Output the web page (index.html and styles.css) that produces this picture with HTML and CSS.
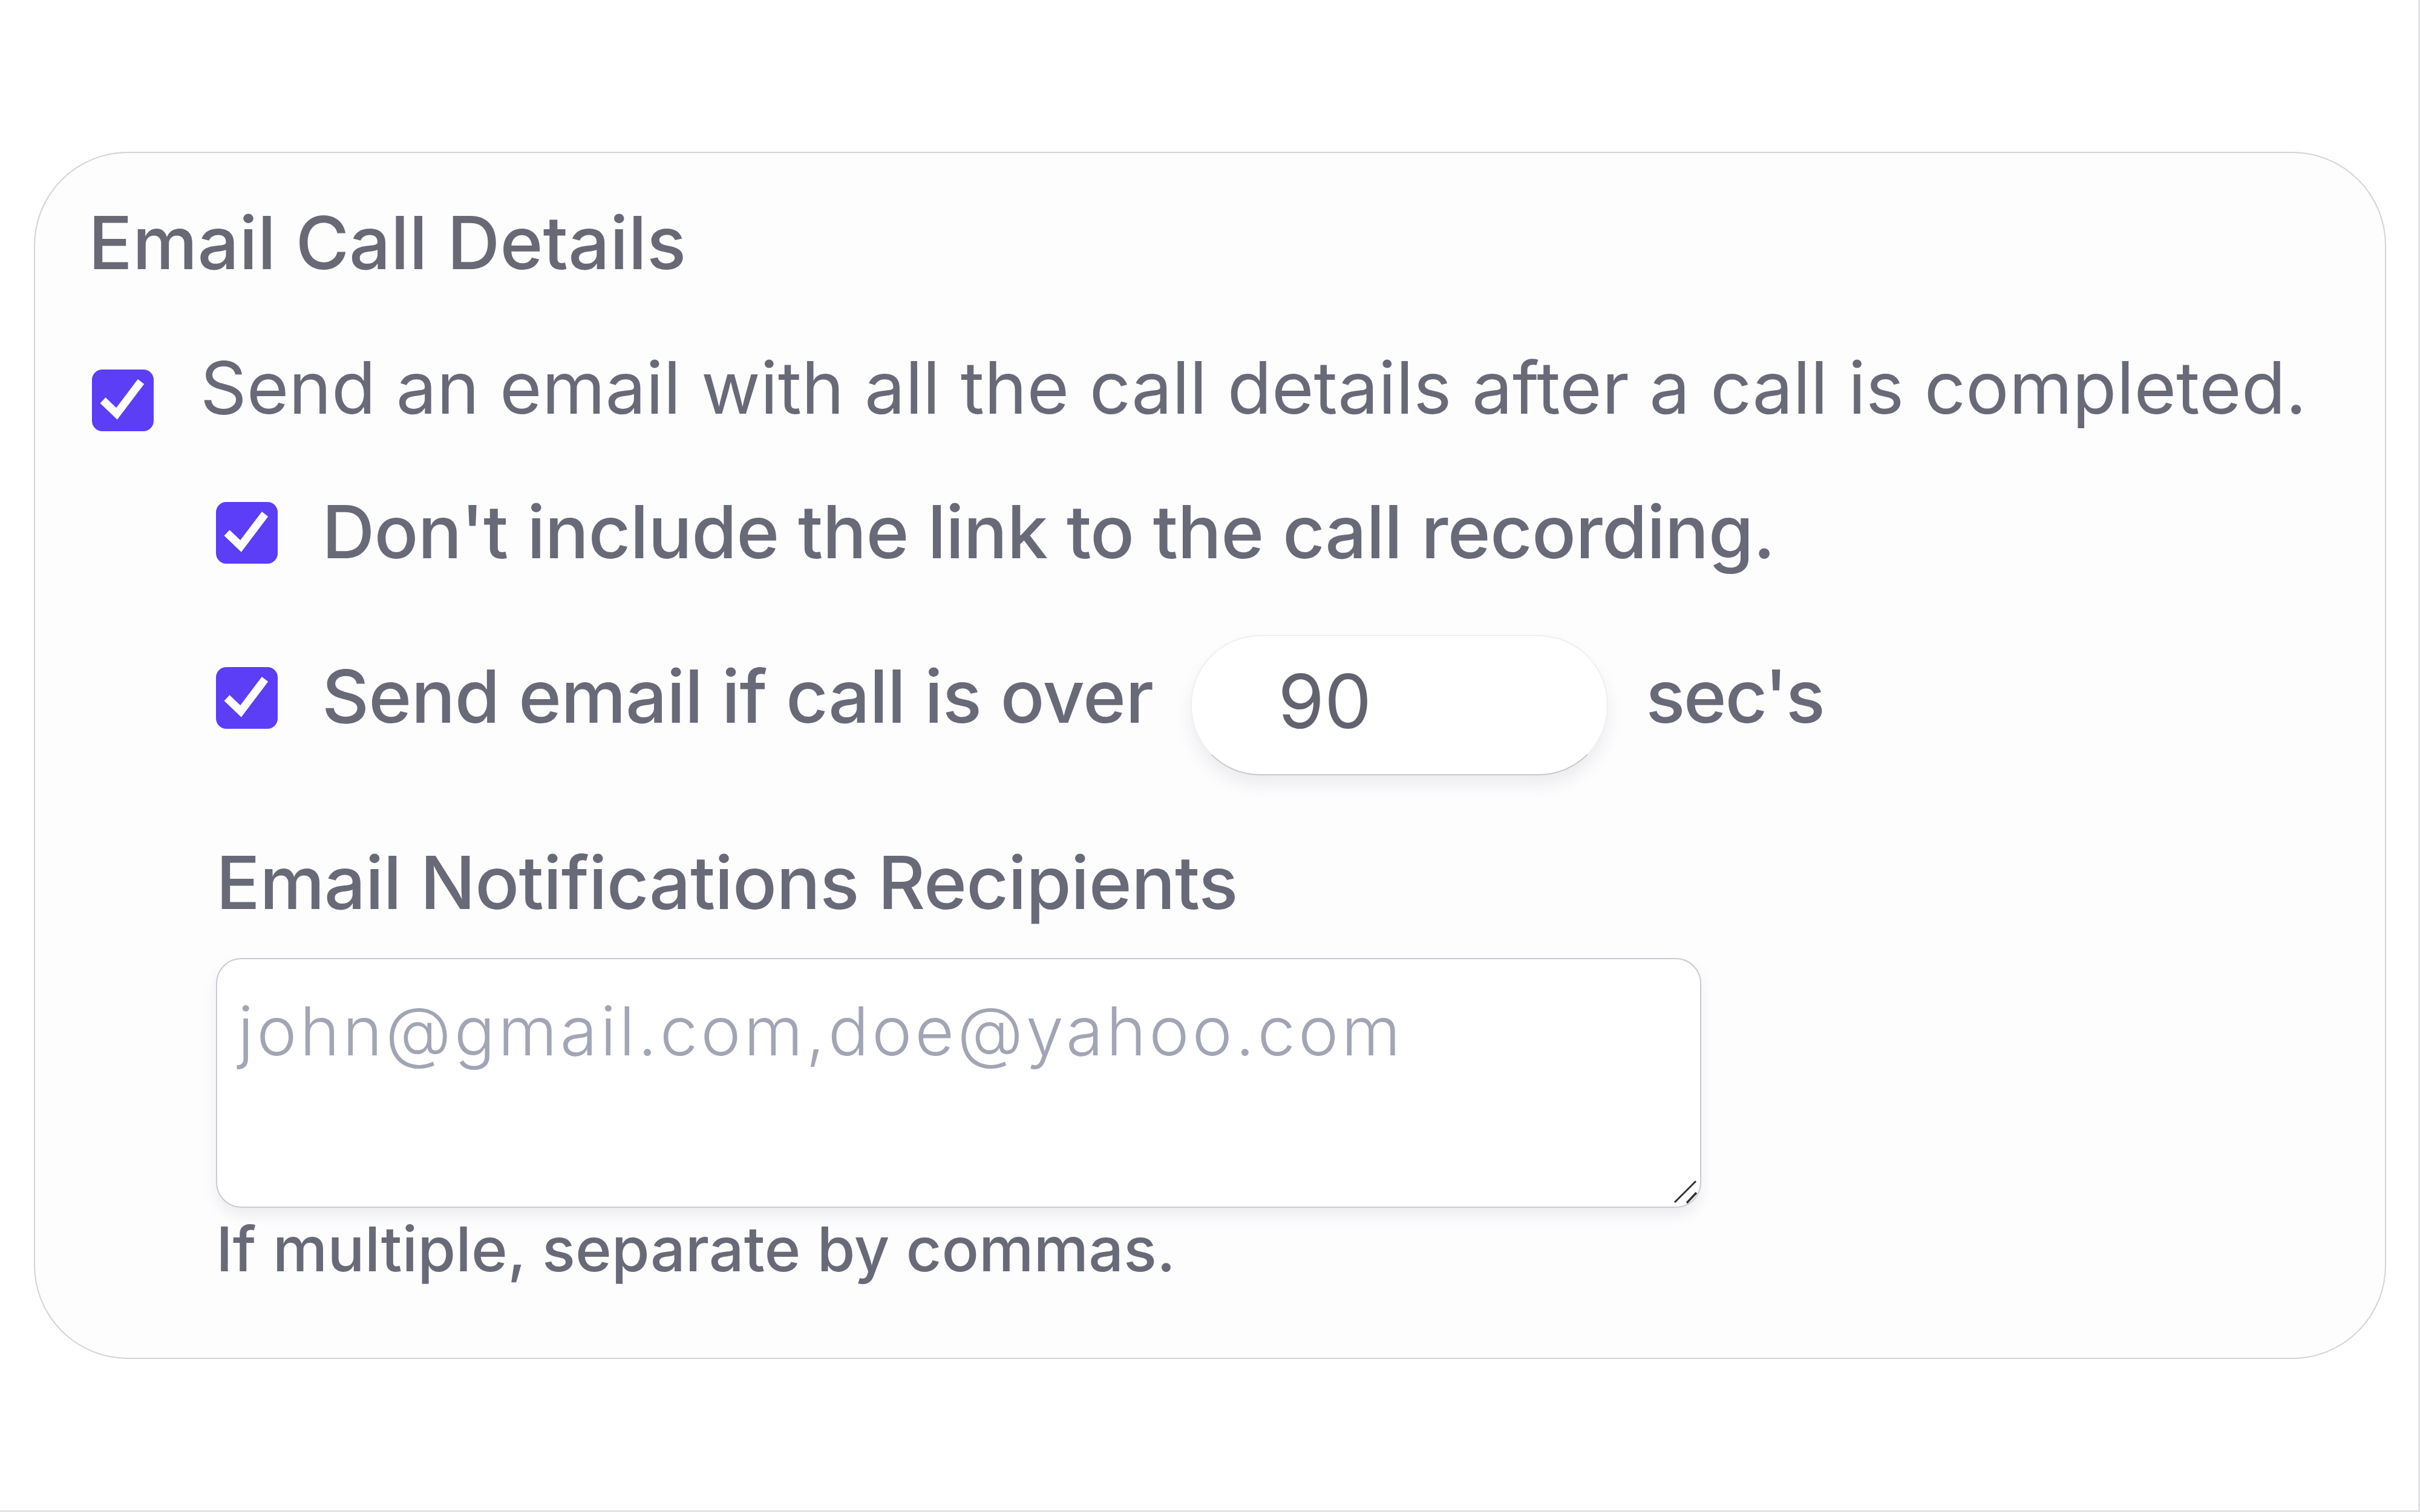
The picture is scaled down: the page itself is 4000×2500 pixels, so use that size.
FILE: index.html
```html
<!DOCTYPE html>
<html lang="en">
<head>
<meta charset="utf-8">
<title>Email Call Details</title>
<link rel="stylesheet" href="styles.css">
</head>
<body>
<div class="page">
  <section class="card">
    <h2 class="title">Email Call Details</h2>

    <label class="row row-main">
      <span class="cb cb-main">
        <svg viewBox="0 0 102 102" width="102" height="102"><polyline points="18,51 41,73 81,20" fill="none" stroke="#ffffff" stroke-width="13" stroke-linejoin="miter" stroke-linecap="butt"/></svg>
      </span>
      <span class="txt txt-main">Send an email with all the call details after a call is completed.</span>
    </label>

    <div class="sub">
      <label class="row row-2">
        <span class="cb cb-2">
          <svg viewBox="0 0 102 102" width="102" height="102"><polyline points="18,51 41,73 81,20" fill="none" stroke="#ffffff" stroke-width="13" stroke-linejoin="miter" stroke-linecap="butt"/></svg>
        </span>
        <span class="txt txt-sub">Don't include the link to the call recording.</span>
      </label>

      <div class="row row-3">
        <span class="cb cb-3">
          <svg viewBox="0 0 102 102" width="102" height="102"><polyline points="18,51 41,73 81,20" fill="none" stroke="#ffffff" stroke-width="13" stroke-linejoin="miter" stroke-linecap="butt"/></svg>
        </span>
        <span class="txt txt-sub txt-r3">Send email if call is over</span>
        <input class="secs" type="text" value="90">
        <span class="txt txt-sub txt-r3 unit">sec's</span>
      </div>

      <div class="field">
        <div class="field-label">Email Notifications Recipients</div>
        <div class="ta-wrap">
          <textarea class="ta" placeholder="john@gmail.com,doe@yahoo.com"></textarea>
          <svg class="grip" viewBox="0 0 40 40" width="40" height="40"><line x1="2" y1="37" x2="37" y2="2" stroke="#2f2f35" stroke-width="3"/><line x1="22" y1="38" x2="38" y2="21" stroke="#2f2f35" stroke-width="3.5"/></svg>
        </div>
        <div class="help">If multiple, separate by commas.</div>
      </div>
    </div>
  </section>
</div>
</body>
</html>
```

FILE: styles.css
```css
html, body {
  margin: 0;
  padding: 0;
  background: #ffffff;
}

.page {
  width: 4000px;
  height: 2500px;
  box-sizing: border-box;
  padding-top: 251px;
  padding-left: 56px;
  border-right: 3px solid #e3e3e5;
  border-bottom: 3px solid #e3e3e5;
  font-family: Inter, "Noto Sans", sans-serif;
  color: #696a77;
}

.card {
  width: 3888px;
  height: 1996px;
  box-sizing: border-box;
  border: 2px solid #d3d3d7;
  border-radius: 155px;
  background: #fdfdfe;
  padding-top: 75px;
  padding-left: 94px;
  display: flex;
  flex-direction: column;
  align-items: flex-start;
}

.title {
  margin: 0 0 0 -6px;
  font-size: 121px;
  line-height: 146px;
  font-weight: 500;
  color: #686974;
}

.row {
  display: flex;
  align-items: flex-start;
}

.row-main {
  margin-top: 95px;
}

.cb {
  flex: none;
  width: 102px;
  height: 102px;
  border-radius: 17px;
  background: #5b3ef6;
  display: flex;
}

.cb svg {
  display: block;
}

.cb-main {
  margin-top: 42px;
}

.txt {
  margin-left: 77px;
  white-space: nowrap;
}

.txt-main {
  font-size: 119.5px;
  line-height: 143px;
  font-weight: 400;
}

.sub {
  margin-left: 205px;
  display: flex;
  flex-direction: column;
  align-items: flex-start;
}

.row-2 {
  margin-top: 93px;
}

.cb-2 {
  margin-top: 24px;
}

.txt-sub {
  font-size: 121px;
  line-height: 146px;
  font-weight: 500;
  letter-spacing: -0.8px;
  margin-left: 73px;
}

.row-3 {
  margin-top: 98px;
}

.cb-3 {
  margin-top: 53px;
}

.txt-r3 {
  margin-top: 28px;
}

.secs {
  margin-left: 62px;
  width: 690px;
  height: 232px;
  box-sizing: border-box;
  border: 2px solid #efeff2;
  border-bottom-color: #c9c9cd;
  border-radius: 115px;
  background: #ffffff;
  box-shadow: 0 16px 26px rgba(40, 40, 60, 0.08);
  padding: 0 0 14px 142px;
  font-family: Inter, "Noto Sans", sans-serif;
  font-size: 124px;
  font-weight: 400;
  color: #62636f;
  outline: none;
}

.unit {
  margin-left: 62px;
  letter-spacing: -2.5px;
}

.field {
  margin-top: 104px;
  display: flex;
  flex-direction: column;
  align-items: flex-start;
}

.field-label {
  font-size: 121px;
  line-height: 146px;
  font-weight: 500;
  letter-spacing: -0.8px;
}

.ta-wrap {
  position: relative;
  margin-top: 52px;
  width: 2455px;
  height: 413px;
}

.ta {
  display: block;
  width: 100%;
  height: 100%;
  box-sizing: border-box;
  margin: 0;
  border: 2px solid #cacbd1;
  border-radius: 42px;
  background: #ffffff;
  box-shadow: 0 12px 22px rgba(40, 40, 60, 0.08);
  padding: 50px 34px 0 34px;
  resize: none;
  font-family: Inter, "Noto Sans", sans-serif;
  font-size: 112px;
  line-height: 136px;
  font-weight: 300;
  letter-spacing: 4.9px;
  color: #62636f;
  outline: none;
}

.ta::placeholder {
  color: #a2a5b3;
  font-weight: 300;
  opacity: 1;
}

.grip {
  position: absolute;
  right: 6px;
  bottom: 6px;
}

.help {
  margin-top: 7px;
  font-size: 102px;
  line-height: 123px;
  font-weight: 500;
  white-space: nowrap;
}
```
